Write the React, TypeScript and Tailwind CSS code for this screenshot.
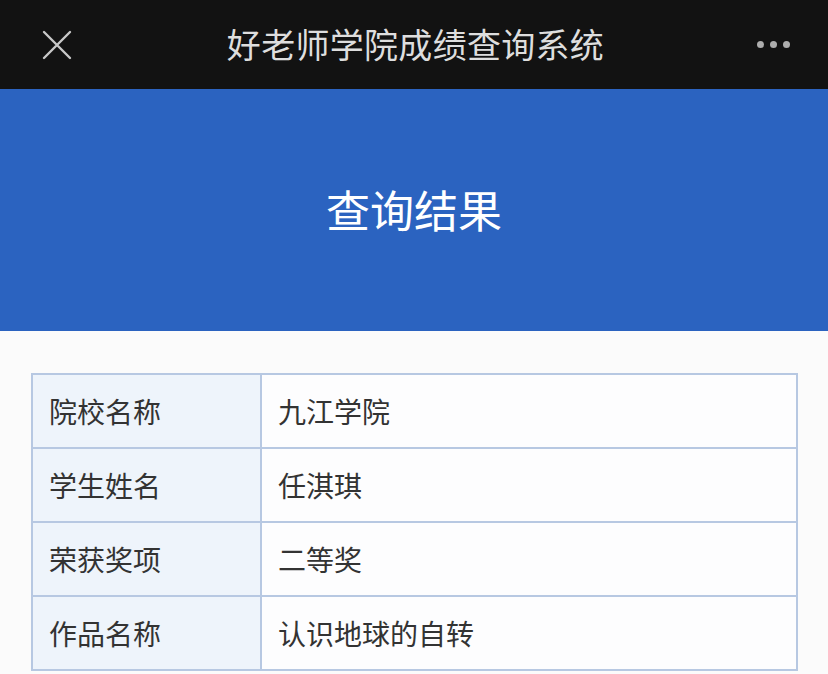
import React from "react";

const rows: [string, string][] = [
  ["院校名称", "九江学院"],
  ["学生姓名", "任淇琪"],
  ["荣获奖项", "二等奖"],
  ["作品名称", "认识地球的自转"],
];

export default function App() {
  return (
    <div
      className="w-[828px] h-[674px] overflow-hidden bg-[#fbfbfb]"
      style={{ fontFamily: '"Noto Sans CJK SC", "Noto Sans", sans-serif' }}
    >
      <div className="h-[89px] bg-[#121212] flex items-center px-[42px] relative">
        <svg width="30" height="30" viewBox="0 0 30 30" className="shrink-0">
          <path d="M2 2 L28 28 M28 2 L2 28" stroke="#c8c8c8" strokeWidth="2.4" strokeLinecap="round" />
        </svg>
        <div className="flex-1 text-center text-[34px] text-[#dedede] leading-none -mt-[2px] pl-[2px] tracking-[0.3px]">
          好老师学院成绩查询系统
        </div>
        <div className="flex gap-[6px] items-center mr-[-4px]">
          <span className="w-[7px] h-[7px] rounded-full bg-[#adadad]" />
          <span className="w-[7px] h-[7px] rounded-full bg-[#adadad]" />
          <span className="w-[7px] h-[7px] rounded-full bg-[#adadad]" />
        </div>
      </div>
      <div className="h-[242px] bg-[#2b63c0] flex items-center justify-center">
        <div className="text-[44px] text-white leading-none mt-[-2px]">查询结果</div>
      </div>
      <div className="pt-[42px] pl-[31px]">
        <div className="w-[767px] border-2 border-[#b7c8e2] bg-white">
          {rows.map(([k, v], i) => (
            <div
              key={k}
              className={`flex h-[72px] ${i > 0 ? "border-t-2 border-[#b7c8e2] h-[74px]" : ""}`}
            >
              <div className="w-[229px] shrink-0 bg-[#eef4fb] border-r-2 border-[#b7c8e2] flex items-center pl-[16px] text-[28px] text-[#333333]">
                {k}
              </div>
              <div className="flex-1 bg-[#fdfdfe] flex items-center pl-[16px] text-[28px] text-[#333333]">
                {v}
              </div>
            </div>
          ))}
        </div>
      </div>
    </div>
  );
}
